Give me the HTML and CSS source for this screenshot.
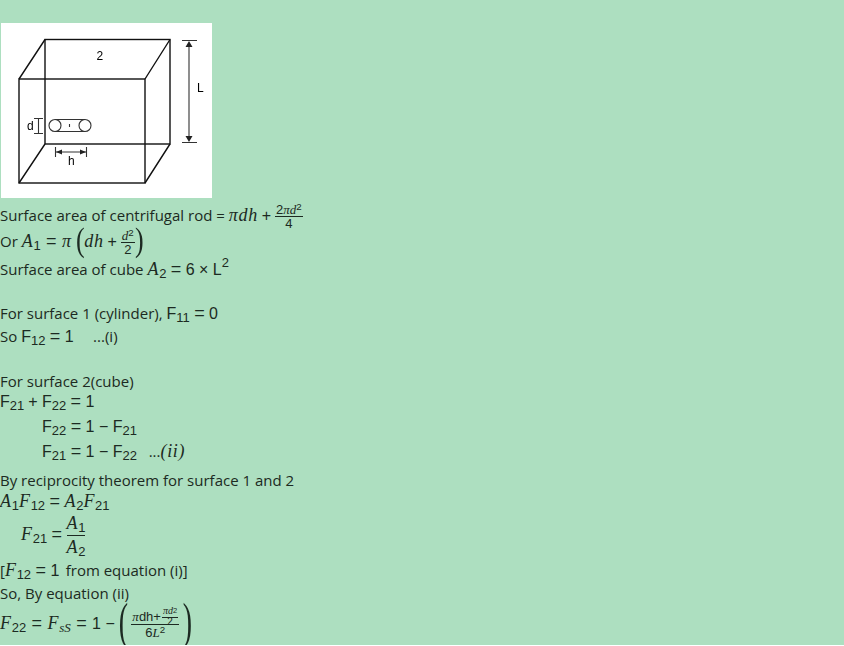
FILE: index.html
```html
<!DOCTYPE html>
<html>
   <head>
      <meta name="viewport" content="width=device-width, initial-scale=1">
      <title>Surface area of centrifugal rod</title>
      <link rel="stylesheet" href="styles.css">
   </head>
   <body>
      <svg class="figure" width="211" height="175" viewBox="1 23 211 175">
        <rect x="1" y="23" width="211" height="175" fill="#fff"/>
        <g fill="none" stroke="#111" stroke-width="1.4">
          <rect x="19" y="79" width="126" height="104"/>
          <rect x="45" y="39.500" width="125" height="104.500"/>
          <path d="M19 79 45 39.500M145 79 170 39.500M19 183 45 144M145 183 170 144"/>
        </g>
        <g fill="none" stroke="#333" stroke-width="1.1">
          <path d="M182 40.500H197M182 142.500H197M189 44V139"/>
          <path d="M55 119.500H85M55 131.500H85M69.500 124V127"/>
          <circle cx="55" cy="125.500" r="6"/>
          <circle cx="85" cy="125.500" r="6"/>
          <path d="M34 118.500H43M34 133.500H43M38.500 118V134"/>
          <path d="M55.500 147V157M86.500 147V157M56 152H86"/>
        </g>
        <g fill="#222">
          <path d="M189 41 185.500 47H192.500ZM189 142 185.500 136H192.500ZM56 152 62 149.500V154.500ZM86 152 80 149.500V154.500Z"/>
        </g>
        <g class="figure-label">
          <text x="96.500" y="60">2</text>
          <text x="197" y="92">L</text>
          <text x="27" y="130">d</text>
          <text x="68" y="165">h</text>
        </g>
      </svg>

      <div class="row first row-26">Surface area of centrifugal rod = <span class="m">πdh</span> <span class="n">+</span> <span class="frac frac-small"><span class="top">2<i>πd</i><sup>2</sup></span><span class="bottom">4</span></span></div>
      <div class="row row-28 wide">Or <span class="m">A</span><sub>1</sub> <span class="n op">=</span> <span class="m">π</span> <span class="paren">(</span><span class="m">dh</span> <span class="n">+</span> <span class="frac frac-small"><span class="top"><i>d</i><sup>2</sup></span><span class="bottom">2</span></span><span class="paren">)</span></div>
      <div class="row row-22">Surface area of cube <span class="m">A</span><sub>2</sub> <span class="n op">=</span> <span class="n">6 × L</span><sup>2</sup></div>
      <div class="row row-22"></div>
      <div class="row row-23">For surface 1 (cylinder), <span class="n">F</span><sub>11</sub> <span class="n op">=</span> <span class="n">0</span></div>
      <div class="row row-23">So <span class="n">F</span><sub>12</sub> <span class="n op">=</span> <span class="n">1</span> &nbsp; &nbsp; ...(i)</div>
      <div class="row row-22"></div>
      <div class="row row-20">For surface 2(cube)</div>
      <div class="row row-25"><span class="n">F</span><sub>21</sub> <span class="n">+ F</span><sub>22</sub> <span class="n op">=</span> <span class="n">1</span></div>
      <div class="row row-25 indent"><span class="n">F</span><sub>22</sub> <span class="n op">=</span> <span class="n">1 − F</span><sub>21</sub></div>
      <div class="row row-29 indent"><span class="n">F</span><sub>21</sub> <span class="n op">=</span> <span class="n">1 − F</span><sub>22</sub> &nbsp; ...<span class="m">(ii)</span></div>
      <div class="row row-21">By reciprocity theorem for surface 1 and 2</div>
      <div class="row row-33"><span class="m">A</span><sub>1</sub><span class="m">F</span><sub>12</sub> <span class="n op">=</span> <span class="m">A</span><sub>2</sub><span class="m">F</span><sub>21</sub></div>
      <div class="row row-36 indent-small"><span class="m">F</span><sub>21</sub> <span class="n op">=</span> <span class="frac frac-large"><span class="top"><span class="m">A</span><sub>1</sub></span><span class="bottom"><span class="m">A</span><sub>2</sub></span></span></div>
      <div class="row row-23">[<span class="m">F</span><sub>12</sub> <span class="n op">=</span> <span class="n">1</span>&#8201; from equation (i)]</div>
      <div class="row row-30">So, By equation (ii)</div>
      <div class="row wide"><span class="m">F</span><sub>22</sub> <span class="n op">=</span> <span class="m">F<sub class="small">sS</sub></span> <span class="n op">=</span> <span class="n">1 −</span> <span class="paren paren-large">(</span><span class="frac frac-nested"><span class="top"><i>π</i>dh+<span class="frac frac-tiny"><span class="top"><i>πd</i><sup>2</sup></span><span class="bottom">2</span></span></span><span class="bottom">6<i>L</i><sup>2</sup></span></span><span class="paren paren-large">)</span></div>
   </body>
</html>
```

FILE: styles.css
```css
html {
  background: #fff;
}

body {
  margin: 0;
  height: 645px;
  overflow: hidden;
  background-color: #addfc0;
  color: #1c2a22;
  font-family: "Open Sans", sans-serif;
  font-size: 15px;
}

.figure {
  display: block;
  margin: 23px 0 0 1px;
  filter: blur(0.3px);
}

.figure-label {
  font-family: "Liberation Sans", sans-serif;
  font-size: 12px;
}

/* every row has the same line box, its height is the step to the next baseline */
.row {
  line-height: 22px;
  white-space: pre;
}

.first { margin-top: 6px; }

.row-20 { height: 20px; }
.row-21 { height: 21px; }
.row-22 { height: 22px; }
.row-23 { height: 23px; }
.row-25 { height: 25px; }
.row-26 { height: 26px; }
.row-28 { height: 28px; }
.row-29 { height: 29px; }
.row-30 { height: 30px; }
.row-33 { height: 33px; }
.row-36 { height: 36px; }

.indent {
  padding-left: 42px;
}

.indent-small {
  padding-left: 21px;
}

.m,
.n {
  line-height: 0;
}

.m {
  font-family: "Liberation Serif", serif;
  font-style: italic;
  font-size: 18px;
  letter-spacing: 0.7px;
}

.n {
  font-family: "Liberation Sans", sans-serif;
  font-size: 16px;
}

.op {
  margin: 0 0.5px;
  font-size: 18px;
}

.wide .op {
  margin: 0 1.500px;
}

sub,
sup {
  font-family: "Liberation Sans", sans-serif;
  font-size: 13px;
  line-height: 0;
}

sub {
  vertical-align: -3px;
}

sup {
  vertical-align: 8px;
}

sub.small {
  font-family: "Liberation Serif", serif;
  font-size: 13px;
  letter-spacing: 0;
}

.frac {
  display: inline-flex;
  flex-direction: column;
  align-items: center;
  margin: -20px 0;
  vertical-align: middle;
  font-family: "Liberation Sans", sans-serif;
  line-height: 1;
}

.frac .top {
  border-bottom: 1px solid #1c2a22;
  padding: 0 1px;
}

.frac i {
  font-family: "Liberation Serif", serif;
}

.frac sup {
  font-size: 0.75em;
  vertical-align: 0.45em;
}

.frac-small {
  font-size: 13px;
}

.frac-large .top,
.frac-large .bottom {
  display: block;
  line-height: 23px;
}

.frac-large .top {
  padding: 0;
}

.frac-nested {
  margin: -20px 4px;
  font-size: 13px;
}

.frac-nested .top {
  display: flex;
  align-items: center;
  padding: 0 1px 1px;
}

.frac-nested .bottom {
  line-height: 15px;
}

.frac-tiny {
  margin: -6px 0 -6px 1px;
  font-size: 10px;
}

.frac-tiny .bottom {
  line-height: 8px;
}

.paren {
  display: inline-block;
  margin: -20px 1px;
  font-family: "Liberation Serif", serif;
  font-size: 20px;
  line-height: 22px;
  transform: scale(1.3, 1.7);
  transform-origin: 50% 55%;
}

.paren-large {
  margin: -20px 1px;
  transform: scale(1.4, 2.5);
}
```
